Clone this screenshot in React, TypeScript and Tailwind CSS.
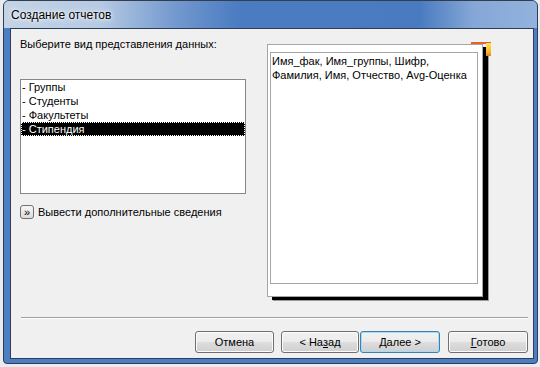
import React from 'react';

const font = { fontFamily: '"Liberation Sans", Arial, sans-serif' };

const items = ['- Группы', '- Студенты', '- Факультеты', '- Стипендия'];

function WizButton({ children, focused, w }: { children: React.ReactNode; focused?: boolean; w: string }) {
  return (
    <button
      className={`${w} h-[22px] rounded-[3px] border text-[11px] text-black leading-none flex items-center justify-center bg-[linear-gradient(to_bottom,#f2f2f2_0%,#ebebeb_48%,#dddddd_52%,#cfcfcf_100%)] ${
        focused
          ? 'border-[#3c7fb1] shadow-[inset_0_0_0_1px_#a8dcf6]'
          : 'border-[#707070] shadow-[inset_0_0_0_1px_#fbfbfb]'
      }`}
    >
      {children}
    </button>
  );
}

export default function App() {
  return (
    <div className="w-[540px] h-[367px] bg-[#e8ebef] overflow-hidden" style={font}>
      <div className="ml-[3px] w-[535px] h-[364px] rounded-t-[6px] rounded-b-[4px] border border-[#333d4c] bg-[#4c7ec4] flex flex-col overflow-hidden">
        {/* Title bar */}
        <div className="h-[27px] shrink-0 flex items-center pl-[7px] bg-[linear-gradient(to_right,#c4d3e6_0%,#b6cae3_18%,#7399cf_32%,#4b7cc1_44%,#4a7bc0_78%,#85a7d7_88%,#93b2dd_100%)]">
          <span className="text-[12px] text-black [text-shadow:0_0_6px_#ffffff,0_0_3px_#ffffff]">
            Создание отчетов
          </span>
        </div>

        {/* Client area */}
        <div className="ml-[6px] mr-[3px] h-[331px] shrink-0 border border-[#2c3d58] bg-[#f0f0f0] flex flex-col">
          <div className="h-[288px] flex items-start pl-[9px] pt-[9px]">
            {/* Left column */}
            <div className="w-[226px] flex flex-col">
              <div className="text-[11px] leading-[13px] text-black">Выберите вид представления данных:</div>
              <div className="mt-[28px] h-[115px] border border-[#828790] bg-white">
                {items.map((it, i) => (
                  <div
                    key={it}
                    className={`h-[14px] pl-[1px] text-[11px] leading-[14px] ${
                      i === 3 ? 'bg-black text-white outline-1 outline-dotted outline-[#ffffff] -outline-offset-1' : 'text-black'
                    }`}
                  >
                    {it}
                  </div>
                ))}
              </div>
              <div className="mt-[11px] flex items-center">
                <span className="w-[14px] h-[14px] rounded-[3px] border border-[#707070] bg-[linear-gradient(to_bottom,#f6f6f6,#dcdcdc)] flex items-center justify-center text-[11px] leading-none text-black">
                  »
                </span>
                <span className="ml-[4px] text-[11px] leading-[13px] text-black">Вывести дополнительные сведения</span>
              </div>
            </div>

            {/* Preview */}
            <div className="ml-[21px] mt-[6px] relative">
              <div className="w-[216px] h-[253px] bg-white border border-[#a6a6a6] pt-[7px] pl-[2px] shadow-[5px_3px_0_#000000,6px_4px_0_#9a9a9a]">
                <div className="w-[208px] h-[232px] border border-[#a6a6a6] pl-[1px] pt-[1px] text-[11px] leading-[14px] text-black">
                  Имя_фак, Имя_группы, Шифр,
                  <br />
                  Фамилия, Имя, Отчество, Avg-Оценка
                </div>
              </div>
              <span className="absolute left-[204px] top-[-2px] w-[20px] h-[2px] bg-[#e8622a]" />
              <span className="absolute left-[219px] top-[-1px] w-[5px] h-[13px] bg-[linear-gradient(to_bottom,#ffe45c,#f8b62a_70%,#e8742a)]" />
            </div>
          </div>

          {/* Separator */}
          <div className="ml-[10px] mr-[5px] h-px bg-[#a0a0a0]" />
          <div className="ml-[10px] mr-[5px] h-px bg-white" />

          {/* Buttons */}
          <div className="mt-[12px] flex justify-end pr-[5px]">
            <WizButton w="w-[79px]">Отмена</WizButton>
            <div className="ml-[7px]">
              <WizButton w="w-[78px]">
                &lt; На<span className="underline">з</span>ад
              </WizButton>
            </div>
            <div className="ml-[1px]">
              <WizButton w="w-[80px]" focused>
                <span className="underline">Д</span>алее &gt;
              </WizButton>
            </div>
            <div className="ml-[8px]">
              <WizButton w="w-[80px]">
                <span className="underline">Г</span>отово
              </WizButton>
            </div>
          </div>
        </div>
      </div>
    </div>
  );
}
